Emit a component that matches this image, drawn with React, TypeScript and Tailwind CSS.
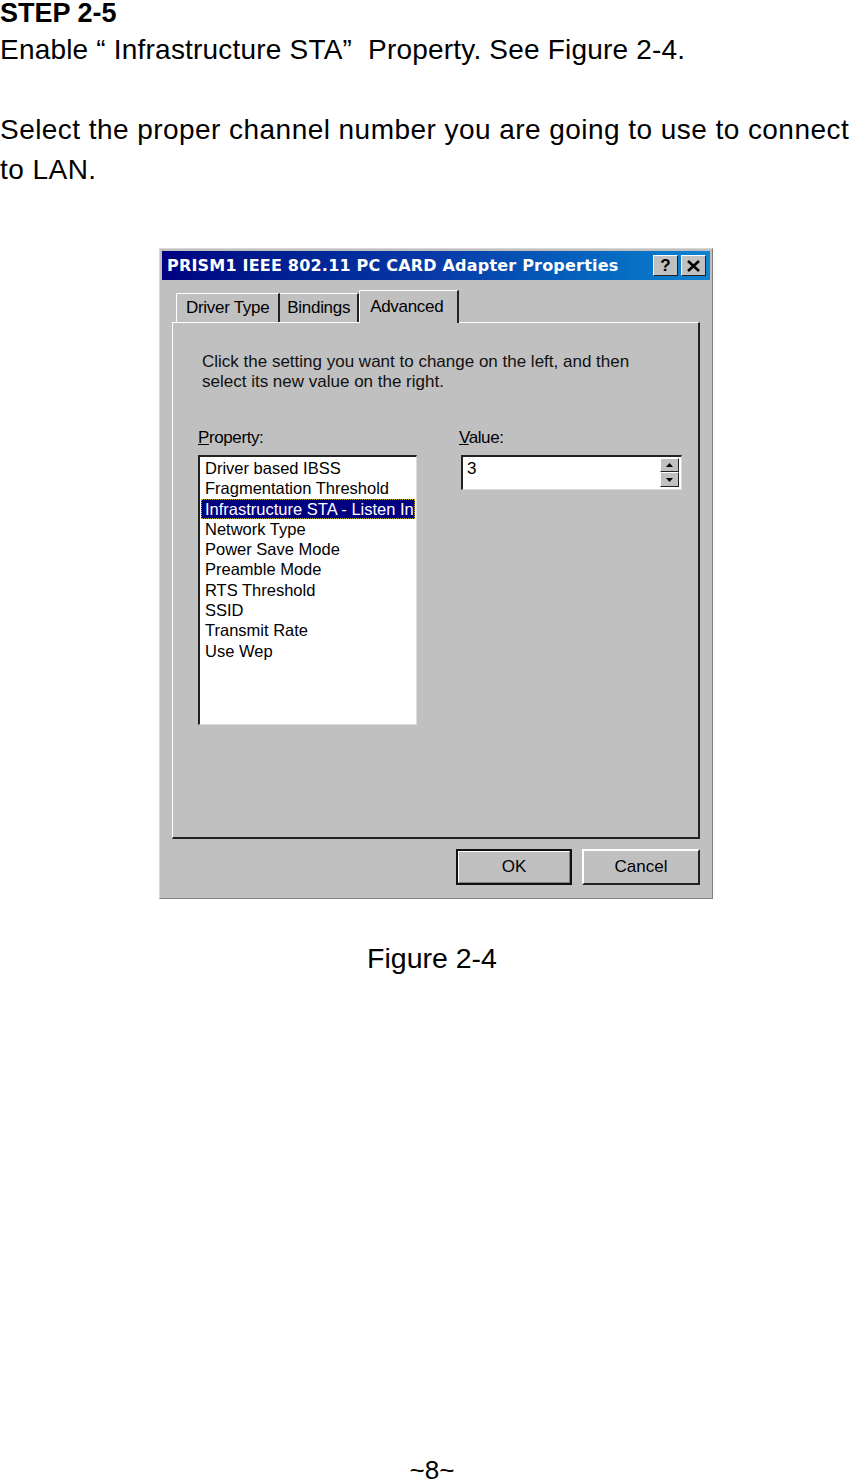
import React from 'react';

const items = [
  'Driver based IBSS',
  'Fragmentation Threshold',
  'Infrastructure STA - Listen Interval',
  'Network Type',
  'Power Save Mode',
  'Preamble Mode',
  'RTS Threshold',
  'SSID',
  'Transmit Rate',
  'Use Wep',
];

const sans = { fontFamily: '"Liberation Sans", Arial, sans-serif' };

const Raised: React.FC<{ className?: string; children?: React.ReactNode }> = ({ className = '', children }) => (
  <div className={`border-t border-l border-t-white border-l-white border-r border-b border-r-[#222] border-b-[#222] bg-[#c0c0c0] ${className}`}>
    {children}
  </div>
);

const App: React.FC = () => {
  return (
    <div className="w-[852px] h-[1483px] bg-white text-black flex flex-col" style={sans}>
      {/* Page text */}
      <div className="text-[27px] font-bold leading-[28px] tracking-[0px] -mt-[1px]">STEP 2-5</div>
      <p className="text-[28px] leading-[40px] mt-[3px] tracking-[0.2px] whitespace-nowrap">
        Enable “ Infrastructure STA”&nbsp; Property. See Figure 2-4.
      </p>
      <p className="text-[28px] leading-[40px] mt-[40px] tracking-[0.45px] whitespace-nowrap">
        Select the proper channel number you are going to use to connect
        <br />
        to LAN.
      </p>

      {/* Dialog */}
      <div className="ml-[159px] mt-[58px] w-[554px] h-[651px] bg-[#c0c0c0] border border-t-[#d8d8d8] border-l-[#d8d8d8] border-r-[#808080] border-b-[#808080] p-[2px] flex flex-col">
        <div className="h-[29px] flex items-center justify-between pl-[5px] pr-[4px] bg-gradient-to-r from-[#000080] via-[#0a3aa8] to-[#1084d0]">
          <span className="text-white font-bold tracking-[0.2px]" style={{ fontFamily: '"DejaVu Sans", "Liberation Sans", sans-serif', fontSize: '16px' }}>
            PRISM1 IEEE 802.11 PC CARD Adapter Properties
          </span>
          <div className="flex gap-[3px]">
            <Raised className="w-[25px] h-[21px] flex items-center justify-center text-[17px] font-bold leading-none">?</Raised>
            <Raised className="w-[25px] h-[21px] flex items-center justify-center">
              <svg width="13" height="12" viewBox="0 0 13 12">
                <path d="M1 1 L12 11 M12 1 L1 11" stroke="#000" strokeWidth="2.6" />
              </svg>
            </Raised>
          </div>
        </div>

        <div className="flex-1 px-[10px] pt-[9px] flex flex-col text-[17px]" style={sans}>
          {/* Tabs */}
          <div className="flex items-end pl-[4px] h-[33px] relative z-10">
            <div className="h-[29px] px-[9px] flex items-center border-t border-l border-t-white border-l-white border-r-2 border-r-[#222] rounded-tl-[2px] tracking-[-0.3px]">Driver Type</div>
            <div className="h-[29px] px-[7px] flex items-center border-t border-t-white border-r-2 border-r-[#222] tracking-[-0.3px]">Bindings</div>
            <div className="h-[33px] w-[100px] -mb-[1px] px-[10px] flex items-start pt-[3px] bg-[#c0c0c0] border-t border-l border-t-white border-l-white border-r-2 border-r-[#222] rounded-tl-[2px] tracking-[-0.3px]">Advanced</div>
          </div>

          <div className="h-[517px] border-t border-l border-t-white border-l-white border-r-2 border-b-2 border-r-[#222] border-b-[#222] pl-[25px] pt-[29px] flex flex-col">
            <p className="pl-[4px] leading-[20px] text-[#111]">
              Click the setting you want to change on the left, and then
              <br />
              select its new value on the right.
            </p>

            <div className="flex mt-[37px] gap-[42px]">
              <div className="w-[219px] flex flex-col">
                <div className="leading-[18px] tracking-[-0.4px] mb-[8px]">
                  <span className="underline">P</span>roperty:
                </div>
                <div className="h-[270px] bg-white border-t-2 border-l-2 border-t-[#222] border-l-[#222] border-r border-b border-r-[#dcdcdc] border-b-[#dcdcdc] p-[1px] overflow-hidden text-[16.5px]">
                  {items.map((it, i) => (
                    <div
                      key={it}
                      className={`h-[20.3px] leading-[20px] pl-[4px] whitespace-nowrap ${i === 2 ? 'bg-[#000080] text-white outline-1 outline-dotted outline-[#c8b400] -outline-offset-1' : ''}`}
                    >
                      {it}
                    </div>
                  ))}
                </div>
              </div>

              <div className="flex flex-col">
                <div className="leading-[18px] tracking-[-0.4px] mb-[8px]">
                  <span className="underline">V</span>alue:
                </div>
                <div className="ml-[2px] w-[221px] h-[35px] bg-white border-t-2 border-l-2 border-t-[#222] border-l-[#222] border-r border-b border-r-[#dcdcdc] border-b-[#dcdcdc] flex items-start justify-between pl-[4px] pr-[2px] pt-[1px]">
                  <span className="leading-[22px]">3</span>
                  <div className="flex flex-col">
                    <Raised className="w-[19px] h-[14px] flex items-center justify-center">
                      <svg width="7" height="4" viewBox="0 0 7 4"><path d="M3.5 0 L7 4 L0 4 Z" fill="#000" /></svg>
                    </Raised>
                    <Raised className="w-[19px] h-[15px] flex items-center justify-center">
                      <svg width="7" height="4" viewBox="0 0 7 4"><path d="M0 0 L7 0 L3.5 4 Z" fill="#000" /></svg>
                    </Raised>
                  </div>
                </div>
              </div>
            </div>
          </div>

          {/* Buttons */}
          <div className="flex justify-end gap-[10px] mt-[10px]">
            <div className="w-[116px] h-[36px] border-2 border-[#111] flex">
              <div className="flex-1 border-t border-l border-t-white border-l-white border-r border-b border-r-[#808080] border-b-[#808080] flex items-center justify-center">OK</div>
            </div>
            <div className="w-[118px] h-[36px] border-t-2 border-l-2 border-t-white border-l-white border-r-2 border-b-2 border-r-[#222] border-b-[#222] flex items-center justify-center">
              Cancel
            </div>
          </div>
        </div>
      </div>

      <div className="text-[28.5px] leading-[30px] mt-[44px] text-center pl-[12px]">Figure 2-4</div>

      <div className="mt-auto text-[26px] leading-[26px] text-center pl-[12px]">~8~</div>
    </div>
  );
};

export default App;
